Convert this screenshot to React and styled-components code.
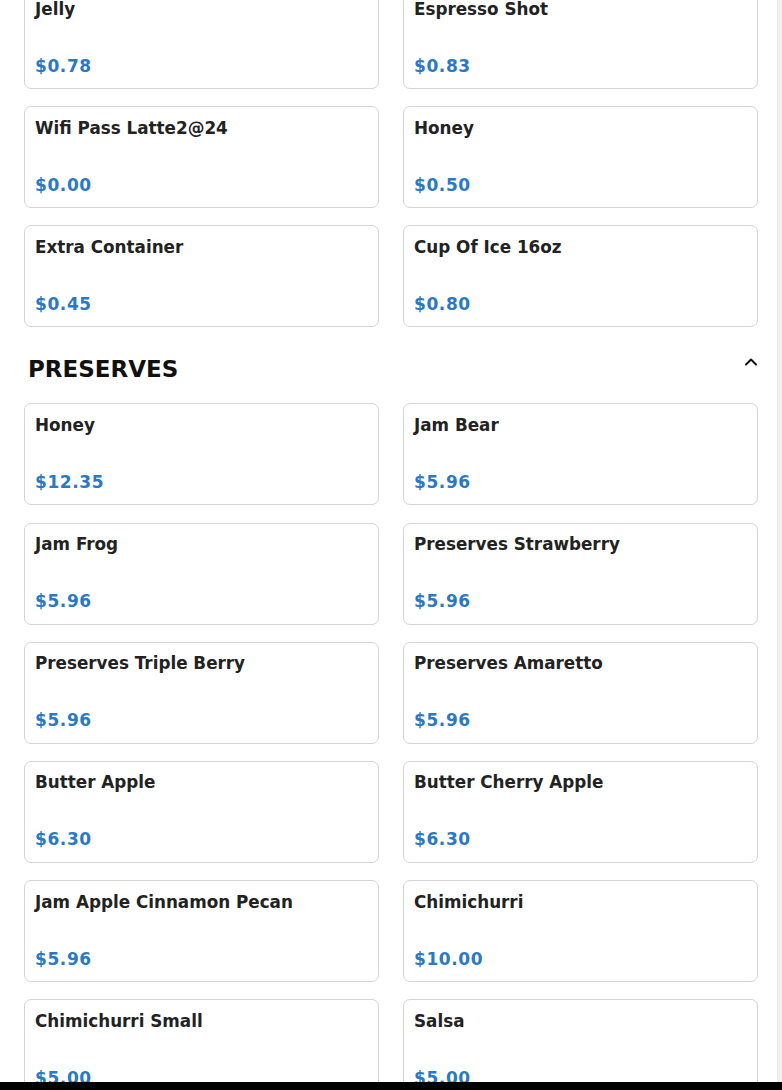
import React from "react";
import styled, { createGlobalStyle } from "styled-components";

const GlobalStyle = createGlobalStyle`
  html, body {
    margin: 0;
    padding: 0;
    background: #ffffff;
  }
  body {
    font-family: "DejaVu Sans", "Liberation Sans", sans-serif;
    overflow: hidden;
  }
`;

const Page = styled.main`
  width: 782px;
  box-sizing: border-box;
  padding: 0 24px;
  margin-top: -13px;
`;

const Section = styled.section`
  display: flex;
  flex-direction: column;
`;

const SectionHeader = styled.div`
  display: flex;
  align-items: center;
  justify-content: space-between;
  margin: 29px 0 21px;
  padding: 0 0 0 4px;
  height: 26px;
`;

const SectionTitle = styled.h2`
  margin: 0;
  font-size: 23px;
  line-height: 26px;
  font-weight: 700;
  color: #111;
  letter-spacing: 0;
`;

const Toggle = styled.button`
  border: none;
  background: transparent;
  padding: 0;
  width: 16px;
  height: 16px;
  display: flex;
  align-items: center;
  justify-content: center;
  margin-top: -15px;
  margin-right: -1px;
  cursor: pointer;
`;

const Grid = styled.div`
  display: grid;
  grid-template-columns: 1fr 1fr;
  column-gap: 24px;
  row-gap: 17.2px;
`;

const Card = styled.div`
  box-sizing: border-box;
  height: 102px;
  border: 1px solid #d4d4d4;
  border-radius: 7px;
  background: #fff;
  padding: 10.5px 10px 0 10px;
  display: flex;
  flex-direction: column;
`;

const ItemName = styled.div`
  font-size: 16.8px;
  line-height: 20px;
  font-weight: 700;
  color: #222;
  white-space: nowrap;
`;

const Price = styled.div`
  margin-top: 37px;
  font-size: 17px;
  line-height: 20px;
  font-weight: 700;
  color: #2a79c2;
  letter-spacing: 0.6px;
`;

const ScrollTrack = styled.div`
  position: fixed;
  top: 0;
  right: 0;
  width: 4px;
  height: 100%;
  background: #f1f1f1;
  border-left: 1px solid #e8e8e8;
`;

const BottomBar = styled.div`
  position: fixed;
  left: 0;
  right: 0;
  bottom: 0;
  height: 8px;
  background: #000;
`;

const extras = [
  ["Jelly", "$0.78"],
  ["Espresso Shot", "$0.83"],
  ["Wifi Pass Latte2@24", "$0.00"],
  ["Honey", "$0.50"],
  ["Extra Container", "$0.45"],
  ["Cup Of Ice 16oz", "$0.80"],
];

const preserves = [
  ["Honey", "$12.35"],
  ["Jam Bear", "$5.96"],
  ["Jam Frog", "$5.96"],
  ["Preserves Strawberry", "$5.96"],
  ["Preserves Triple Berry", "$5.96"],
  ["Preserves Amaretto", "$5.96"],
  ["Butter Apple", "$6.30"],
  ["Butter Cherry Apple", "$6.30"],
  ["Jam Apple Cinnamon Pecan", "$5.96"],
  ["Chimichurri", "$10.00"],
  ["Chimichurri Small", "$5.00"],
  ["Salsa", "$5.00"],
];

const Chevron = () => (
  <svg width="14" height="10" viewBox="0 0 14 10" fill="none">
    <path d="M2 7.5 L7 2.5 L12 7.5" stroke="#111" strokeWidth="2" strokeLinecap="round" strokeLinejoin="round" />
  </svg>
);

const ItemGrid = ({ items }) => (
  <Grid>
    {items.map(([name, price], i) => (
      <Card key={i}>
        <ItemName>{name}</ItemName>
        <Price>{price}</Price>
      </Card>
    ))}
  </Grid>
);

export default function App() {
  return (
    <>
      <GlobalStyle />
      <Page>
        <Section>
          <ItemGrid items={extras} />
        </Section>
        <Section>
          <SectionHeader>
            <SectionTitle>PRESERVES</SectionTitle>
            <Toggle aria-label="Collapse">
              <Chevron />
            </Toggle>
          </SectionHeader>
          <ItemGrid items={preserves} />
        </Section>
      </Page>
      <ScrollTrack />
      <BottomBar />
    </>
  );
}
